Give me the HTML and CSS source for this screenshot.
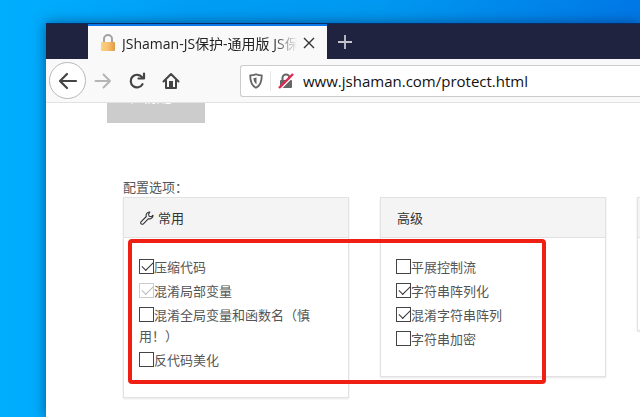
FILE: index.html
```html
<!DOCTYPE html>
<html lang="zh-CN">
  <head>
    <meta charset="UTF-8" />
    <meta name="viewport" content="width=device-width, initial-scale=1.0" />
    <title>JShaman-JS保护-通用版</title>
    <link rel="stylesheet" href="styles.css">
  </head>
  <body>
    <div class="window">
      <div class="tabs">
        <div class="tab">
          <svg class="favicon" width="16" height="18" viewBox="0 0 16 18">
            <defs>
              <linearGradient id="gold" x1="0" x2="1">
                <stop offset="0" stop-color="#fbd27c" />
                <stop offset="0.5" stop-color="#f8c070" />
                <stop offset="1" stop-color="#dd9a48" />
              </linearGradient>
            </defs>
            <path d="M4 9V5a4 4 0 0 1 8 0v4" fill="none" stroke="#a3a3a3" stroke-width="2" />
            <rect x="1" y="8" width="14" height="9" rx="1" fill="url(#gold)" />
          </svg>
          <span class="tab-title">JShaman-JS保护-通用版 JS保护</span>
          <button class="tab-close" aria-label="关闭标签页">
            <svg width="12" height="12" viewBox="0 0 12 12">
              <path d="M1 1l10 10M11 1l-10 10" stroke="#333" stroke-width="1.4" />
            </svg>
          </button>
        </div>
        <button class="new-tab" aria-label="新建标签页">
          <svg width="16" height="16" viewBox="0 0 16 16">
            <path d="M8 1v14M1 8h14" stroke="#c4c4ce" stroke-width="1.8" />
          </svg>
        </button>
      </div>

      <div class="toolbar">
        <button class="back" aria-label="后退">
          <svg width="20" height="18" viewBox="0 0 20 18">
            <path d="M18 9H2.500M9 2L2 9l7 7" fill="none" stroke="#444" stroke-width="2.200" stroke-linecap="round" stroke-linejoin="round" />
          </svg>
        </button>
        <button class="tool" aria-label="前进">
          <svg width="18" height="16" viewBox="0 0 18 16">
            <path d="M1.500 8H16M9.500 1.500L16 8l-6.500 6.500" fill="none" stroke="#b5b5b5" stroke-width="2" stroke-linecap="round" stroke-linejoin="round" />
          </svg>
        </button>
        <button class="tool" aria-label="刷新">
          <svg width="18" height="18" viewBox="0 0 18 18">
            <path d="M14.500 12.200A6.300 6.300 0 1 1 14 5.200" fill="none" stroke="#444" stroke-width="2.200" stroke-linecap="round" />
            <path d="M10.500 6.500H16V1.500" fill="none" stroke="#444" stroke-width="2.200" stroke-linecap="round" stroke-linejoin="round" />
          </svg>
        </button>
        <button class="tool" aria-label="主页">
          <svg width="18" height="18" viewBox="0 0 18 18">
            <path d="M1.500 9.500L9 2l7.500 7.500M4 8.500V16h10V8.500" fill="none" stroke="#444" stroke-width="2" stroke-linecap="round" stroke-linejoin="round" />
            <path d="M7 9h4v7H7z" fill="#444" />
          </svg>
        </button>
        <div class="address">
          <svg width="14" height="16" viewBox="0 0 14 16">
            <path d="M7 1.200c2 .9 4 1.100 5.800 1.100 0 6-1 10.200-5.800 12.500C2.200 12.500 1.200 8.300 1.200 2.300 3 2.300 5 2.100 7 1.200z" fill="none" stroke="#666" stroke-width="1.800" stroke-linejoin="round" />
            <path d="M7.500 4.500v7C5.500 9.800 4.500 7.500 4.400 5.100 5.400 5 6.500 4.900 7.500 4.500z" fill="#666" />
          </svg>
          <span class="divider"></span>
          <svg width="16" height="16" viewBox="0 0 16 16">
            <path d="M4.500 8V5a3.500 3.500 0 0 1 7 0v3" fill="none" stroke="#666" stroke-width="2" />
            <rect x="2" y="7" width="12" height="8" rx="1" fill="#666" />
            <path d="M2.500 16L16 2.500" stroke="#fff" stroke-width="1.500" />
            <path d="M1 15L15 1" stroke="#e22850" stroke-width="2.400" />
          </svg>
          <input class="url" type="text" aria-label="地址" value="www.jshaman.com/protect.html" />
        </div>
      </div>

      <div class="page">
        <button class="upload">下载配置</button>
        <p class="caption">配置选项：</p>
        <div class="cards">
          <section class="card">
            <h2>
              <svg width="14" height="14" viewBox="0 0 14 14">
                <path d="M9.800 1A3.400 3.400 0 0 0 6.300 5.500L1.200 10.600a1.500 1.500 0 0 0 2.200 2.200L8.500 7.700A3.400 3.400 0 0 0 13 4.200L11.200 5.800 9.200 5.300 8.500 3.200z" fill="none" stroke="#333" stroke-width="1.100" stroke-linejoin="round" />
              </svg>
              常用
            </h2>
            <ul>
              <li><label><input type="checkbox" checked />压缩代码</label></li>
              <li><label><input type="checkbox" checked disabled />混淆局部变量</label></li>
              <li><label><input type="checkbox" />混淆全局变量和函数名（慎用！）</label></li>
              <li><label><input type="checkbox" />反代码美化</label></li>
            </ul>
          </section>
          <section class="card">
            <h2>高级</h2>
            <ul>
              <li><label><input type="checkbox" />平展控制流</label></li>
              <li><label><input type="checkbox" checked />字符串阵列化</label></li>
              <li><label><input type="checkbox" checked />混淆字符串阵列</label></li>
              <li><label><input type="checkbox" />字符串加密</label></li>
            </ul>
          </section>
          <section class="card card-next">
            <h2></h2>
          </section>
          <div class="highlight"></div>
        </div>
      </div>
    </div>
  </body>
</html>
```
FILE: styles.css
```css
* {
  box-sizing: border-box;
}
body {
  margin: 0;
  min-height: 100vh;
  display: flex;
  overflow: hidden;
  font-family: "Open Sans", "Noto Sans CJK SC", sans-serif;
  background: linear-gradient(90deg, #00aefe 0%, rgba(0, 174, 254, 0) 30%),
    linear-gradient(90deg, #00a2f8 0%, #0098f0 60%, #0078e6 100%);
}
button {
  padding: 0;
  border: 0;
  background: none;
  display: flex;
  align-items: center;
  justify-content: center;
}
svg {
  flex: none;
}
.window {
  flex: 1;
  min-width: 0;
  margin: 23px 0 0 46px;
  overflow: hidden;
  background: #fff;
  border-top: 1px solid #0a2c66;
  box-shadow: 0 0 12px rgba(0, 30, 80, 0.6);
}

/* tab strip */
.tabs {
  display: flex;
  height: 35px;
  padding-left: 42px;
  background: #202340;
}
.tab {
  display: flex;
  align-items: center;
  width: 239px;
  padding: 0 12px;
  background: #f9f9fa;
  border-top: 2px solid #0a78e8;
}
.favicon {
  margin-right: 6px;
}
.tab-title {
  flex: 1;
  overflow: hidden;
  white-space: nowrap;
  font-size: 14px;
  color: #222;
  -webkit-mask-image: linear-gradient(to left, transparent, #000 24px);
  mask-image: linear-gradient(to left, transparent, #000 24px);
}
.tab-close {
  margin-left: 6px;
}
.new-tab {
  width: 36px;
}

/* toolbar */
.toolbar {
  display: flex;
  align-items: center;
  height: 44px;
  padding-left: 3px;
  background: #f9f9fa;
  border-bottom: 1px solid #e2e2e2;
}
.back {
  width: 37px;
  height: 37px;
  border: 1px solid #b8b8b8;
  border-radius: 50%;
  background: #fff;
}
.tool {
  width: 34px;
  height: 34px;
}
.address {
  flex: 1;
  display: flex;
  align-items: center;
  min-width: 0;
  height: 32px;
  margin-left: 52px;
  padding-left: 8px;
  background: #fff;
  border: 1px solid #ccc;
  border-right: 0;
  border-radius: 3px 0 0 3px;
}
.divider {
  width: 1px;
  height: 20px;
  margin: 0 7px;
  background: #e6e6e6;
}
.url {
  flex: 1;
  min-width: 0;
  margin-left: 9px;
  padding: 0;
  border: 0;
  outline: 0;
  font: 15px "Open Sans", sans-serif;
  color: #111;
}

/* page */
.page {
  overflow: hidden;
  padding: 0 0 20px 77px;
  font-family: "Noto Sans CJK SC", sans-serif;
  font-size: 13px;
  line-height: 21px;
  color: #555;
}
.upload {
  width: 98px;
  height: 56px;
  margin: -36px 0 0 -16px;
  background: #ccc;
  color: #fff;
  font-family: inherit;
  font-size: 16px;
}
.caption {
  margin: 53px 0 0;
}
.cards {
  position: relative;
  display: flex;
  align-items: flex-start;
  gap: 31px;
}
.card {
  flex: none;
  width: 226px;
  border: 1px solid #e2e2e2;
  box-shadow: 0 1px 2px rgba(0, 0, 0, 0.1);
}
.card h2 {
  display: flex;
  align-items: center;
  gap: 4px;
  height: 40px;
  margin: 0;
  padding: 0 16px;
  background: #f4f4f4;
  border-bottom: 1px solid #e2e2e2;
  font-size: 13px;
  font-weight: 400;
  color: #333;
}
.card ul {
  margin: 0;
  padding: 15px 15px 27px;
  list-style: none;
}
.card li {
  padding-top: 3px;
}
.card-next {
  height: 134px;
}
.card input {
  appearance: none;
  width: 15px;
  height: 15px;
  margin: -4px 0 0;
  vertical-align: middle;
  border: 1px solid #444;
  background: #fff;
}
.card input:checked::before {
  content: "";
  display: block;
  width: 10px;
  height: 5px;
  margin: 2px 0 0 2px;
  border: solid #333;
  border-width: 0 0 1px 1px;
  transform: rotate(-45deg);
}
.card input:disabled {
  border-color: #ccc;
}
.card input:disabled::before {
  border-color: #bbb;
}
.highlight {
  position: absolute;
  top: 42px;
  left: 5px;
  width: 418px;
  height: 145px;
  border: 4px solid #f01f14;
  border-radius: 4px;
  pointer-events: none;
}
```
